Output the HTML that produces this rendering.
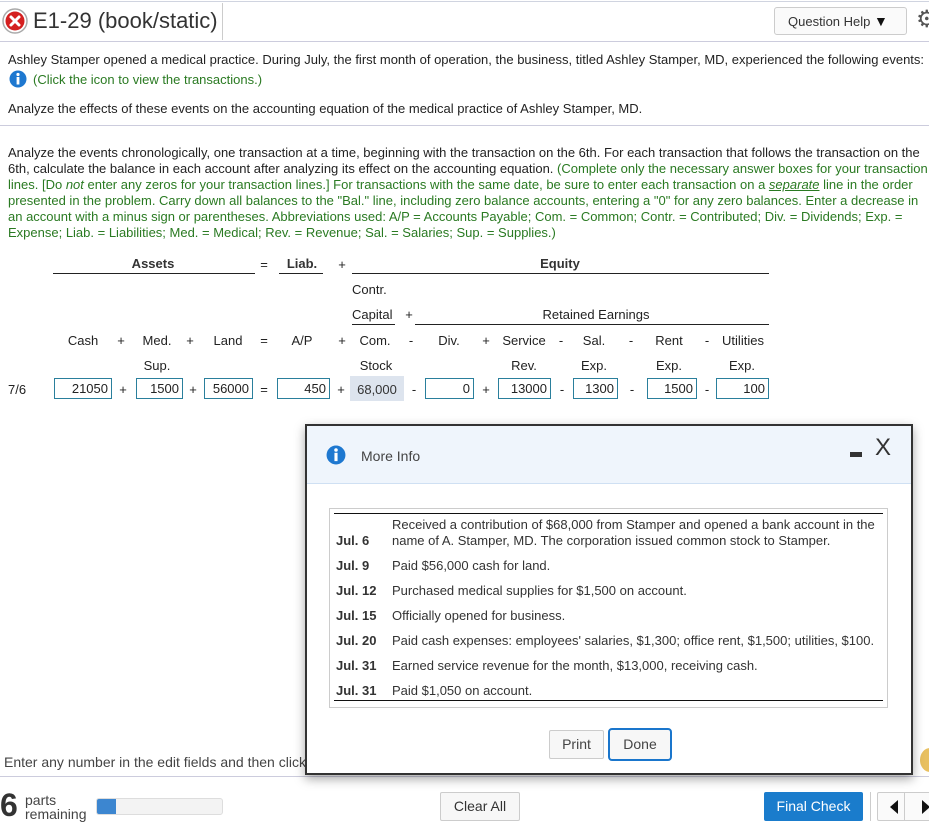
<!DOCTYPE html>
<html><head><meta charset="utf-8"><style>
*{margin:0;padding:0;box-sizing:border-box}
body{width:929px;height:826px;position:relative;overflow:hidden;background:#fff;font-family:"Liberation Sans",Arial,sans-serif;font-size:13px;color:#222}
.a{position:absolute;white-space:nowrap}
.c{position:absolute;white-space:nowrap;transform:translateX(-50%)}
.g{color:#2a7a22}
.hl{position:absolute;height:1px;background:#222}
.box{position:absolute;top:378px;height:21px;border:1px solid #2a7f9c;text-align:right;padding-right:3px;line-height:19px;font-size:13px}
.op{position:absolute;top:382px;transform:translateX(-50%)}
</style></head><body>
<div class="hl" style="left:0;top:1px;width:929px;background:#d0d4e0"></div>
<svg class="a" style="left:2px;top:8px" width="26" height="26" viewBox="0 0 26 26"><circle cx="13" cy="13" r="12" fill="#fff" stroke="#aaa" stroke-width="1.5"/><circle cx="13" cy="13" r="9.5" fill="#d42020"/><path d="M9 9 L17 17 M17 9 L9 17" stroke="#fff" stroke-width="3" stroke-linecap="round"/></svg>
<div class="a" style="left:33px;top:8px;font-size:22px;color:#333">E1-29 (book/static)</div>
<div class="a" style="left:222px;top:3px;width:1px;height:37px;background:#ccc"></div>
<div class="a" style="left:774px;top:7px;width:133px;height:28px;border:1px solid #ccc;border-radius:3px;background:#fafafa;font-size:13px;line-height:26px;padding-left:13px;color:#333">Question Help <span style="font-size:14px;color:#111">▼</span></div>
<div class="a" style="left:916px;top:5px;font-size:24px;color:#555">⚙</div>
<div class="hl" style="left:0;top:41px;width:929px;background:#ccd"></div>

<div class="a" style="left:8px;top:52px">Ashley Stamper opened a medical practice. During July, the first month of operation, the business, titled Ashley Stamper, MD, experienced the following events:</div>
<svg class="a" style="left:9px;top:70px" width="18" height="18" viewBox="0 0 18 18"><circle cx="9" cy="9" r="8.5" fill="#1e78d0"/><rect x="7.6" y="7" width="2.8" height="7.5" fill="#fff"/><circle cx="9" cy="4.5" r="1.6" fill="#fff"/></svg>
<div class="a g" style="left:33px;top:72px">(Click the icon to view the transactions.)</div>
<div class="a" style="left:8px;top:101px">Analyze the effects of these events on the accounting equation of the medical practice of Ashley Stamper, MD.</div>
<div class="hl" style="left:0;top:125px;width:929px;background:#ccd"></div>

<div class="a" style="left:8px;top:145px;line-height:16px">
Analyze the events chronologically, one transaction at a time, beginning with the transaction on the 6th. For each transaction that follows the transaction on the<br>
6th, calculate the balance in each account after analyzing its effect on the accounting equation. <span class="g">(Complete only the necessary answer boxes for your transaction</span><br>
<span class="g">lines. [Do <i>not</i> enter any zeros for your transaction lines.] For transactions with the same date, be sure to enter each transaction on a <i><u>separate</u></i> line in the order</span><br>
<span class="g">presented in the problem. Carry down all balances to the "Bal." line, including zero balance accounts, entering a "0" for any zero balances. Enter a decrease in</span><br>
<span class="g">an account with a minus sign or parentheses. Abbreviations used: A/P = Accounts Payable; Com. = Common; Contr. = Contributed; Div. = Dividends; Exp. =</span><br>
<span class="g">Expense; Liab. = Liabilities; Med. = Medical; Rev. = Revenue; Sal. = Salaries; Sup. = Supplies.)</span>
</div>

<div class="c" style="left:153px;top:256px;font-weight:bold;color:#333">Assets</div>
<div class="hl" style="left:53px;top:273px;width:202px"></div>
<div class="c" style="left:264px;top:257px">=</div>
<div class="c" style="left:302px;top:256px;font-weight:bold;color:#333">Liab.</div>
<div class="hl" style="left:279px;top:273px;width:44px"></div>
<div class="c" style="left:342px;top:257px">+</div>
<div class="c" style="left:560px;top:256px;font-weight:bold;color:#333">Equity</div>
<div class="hl" style="left:352px;top:273px;width:417px"></div>
<div class="a" style="left:352px;top:282px">Contr.</div>
<div class="a" style="left:352px;top:307px">Capital</div>
<div class="hl" style="left:352px;top:324px;width:43px"></div>
<div class="c" style="left:409px;top:307px">+</div>
<div class="c" style="left:596px;top:307px">Retained Earnings</div>
<div class="hl" style="left:415px;top:324px;width:354px"></div>

<div class="c" style="left:83px;top:333px">Cash</div>
<div class="c" style="left:121px;top:333px">+</div>
<div class="c" style="left:157px;top:333px">Med.</div>
<div class="c" style="left:190px;top:333px">+</div>
<div class="c" style="left:228px;top:333px">Land</div>
<div class="c" style="left:264px;top:333px">=</div>
<div class="c" style="left:302px;top:333px">A/P</div>
<div class="c" style="left:342px;top:333px">+</div>
<div class="c" style="left:375px;top:333px">Com.</div>
<div class="c" style="left:411px;top:333px">-</div>
<div class="c" style="left:449px;top:333px">Div.</div>
<div class="c" style="left:486px;top:333px">+</div>
<div class="c" style="left:524px;top:333px">Service</div>
<div class="c" style="left:561px;top:333px">-</div>
<div class="c" style="left:594px;top:333px">Sal.</div>
<div class="c" style="left:631px;top:333px">-</div>
<div class="c" style="left:669px;top:333px">Rent</div>
<div class="c" style="left:707px;top:333px">-</div>
<div class="c" style="left:743px;top:333px">Utilities</div>

<div class="c" style="left:157px;top:358px">Sup.</div>
<div class="c" style="left:376px;top:358px">Stock</div>
<div class="c" style="left:524px;top:358px">Rev.</div>
<div class="c" style="left:594px;top:358px">Exp.</div>
<div class="c" style="left:669px;top:358px">Exp.</div>
<div class="c" style="left:742px;top:358px">Exp.</div>

<div class="a" style="left:8px;top:382px">7/6</div>
<div class="box" style="left:54px;width:58px">21050</div>
<div class="op" style="left:123px">+</div>
<div class="box" style="left:136px;width:47px">1500</div>
<div class="op" style="left:193px">+</div>
<div class="box" style="left:204px;width:49px">56000</div>
<div class="op" style="left:264px">=</div>
<div class="box" style="left:277px;width:53px">450</div>
<div class="op" style="left:341px">+</div>
<div class="a" style="left:350px;top:376px;width:54px;height:25px;background:#dde4ee;text-align:center;line-height:25px;padding-top:1px;color:#333">68,000</div>
<div class="op" style="left:414px">-</div>
<div class="box" style="left:425px;width:49px">0</div>
<div class="op" style="left:486px">+</div>
<div class="box" style="left:498px;width:53px">13000</div>
<div class="op" style="left:562px">-</div>
<div class="box" style="left:573px;width:45px">1300</div>
<div class="op" style="left:632px">-</div>
<div class="box" style="left:647px;width:50px">1500</div>
<div class="op" style="left:707px">-</div>
<div class="box" style="left:716px;width:53px">100</div>

<div class="a" style="left:4px;top:754px;font-size:14px;color:#444">Enter any number in the edit fields and then click</div>
<div class="a" style="left:920px;top:748px;width:20px;height:24px;border-radius:50%;background:#e8c060"></div>
<div class="hl" style="left:0;top:776px;width:929px;background:#ccd"></div>
<div class="a" style="left:0px;top:788px;font-size:32px;font-weight:bold;color:#333;line-height:34px">6</div>
<div class="a" style="left:25px;top:793px;font-size:14px;line-height:14px;color:#444">parts<br>remaining</div>
<div class="a" style="left:96px;top:798px;width:127px;height:17px;border:1px solid #ddd;border-radius:3px;background:#f3f3f3;overflow:hidden"><div style="width:19px;height:100%;background:#3c86d0"></div></div>
<div class="a" style="left:440px;top:792px;width:80px;height:29px;border:1px solid #ccc;border-radius:2px;background:#f7f7f7;text-align:center;line-height:27px;font-size:14px;color:#333">Clear All</div>
<div class="a" style="left:764px;top:792px;width:99px;height:29px;border-radius:2px;background:#1a7ccc;text-align:center;line-height:29px;font-size:14px;color:#fff">Final Check</div>
<div class="a" style="left:870px;top:792px;width:1px;height:29px;background:#ccc"></div>
<div class="a" style="left:877px;top:792px;width:60px;height:29px;border:1px solid #ccc;border-radius:2px;background:#fafafa"></div>
<div class="a" style="left:904px;top:792px;width:1px;height:29px;background:#ccc"></div>
<svg class="a" style="left:885px;top:800px" width="44" height="14"><path d="M13 0 L5 7 L13 14Z" fill="#111"/><path d="M37 0 L45 7 L37 14Z" fill="#111"/></svg>

<div class="a" style="left:305px;top:424px;width:608px;height:351px;border:2px solid #333;background:#fff;box-shadow:0 4px 10px rgba(0,0,0,.35)">
  <div style="position:absolute;left:0;top:0;width:604px;height:58px;background:#eff5fc;border-bottom:1px solid #cfe0f3"></div>
  <svg style="position:absolute;left:19px;top:19px" width="20" height="20" viewBox="0 0 18 18"><circle cx="9" cy="9" r="8.5" fill="#1e78d0"/><rect x="7.6" y="7" width="2.8" height="7.5" fill="#fff"/><circle cx="9" cy="4.5" r="1.6" fill="#fff"/></svg>
  <div style="position:absolute;left:54px;top:22px;font-size:14px;color:#444">More Info</div>
  <div style="position:absolute;left:543px;top:26px;width:12px;height:5px;background:#333"></div>
  <div style="position:absolute;left:568px;top:8px;font-size:24px;color:#333">X</div>
  <div style="position:absolute;left:22px;top:82px;width:559px;height:200px;border:1px solid #ccc"></div>
  <div style="position:absolute;left:27px;top:87px;width:549px;height:1px;background:#111"></div>
  <div style="position:absolute;left:27px;top:274px;width:549px;height:1px;background:#111"></div>
  <div style="position:absolute;left:29px;top:90px;font-size:13px;color:#333;line-height:16px">
    <div style="position:absolute;left:0;top:17px;font-weight:bold">Jul. 6</div>
    <div style="position:absolute;left:56px;top:1px">Received a contribution of $68,000 from Stamper and opened a bank account in the<br>name of A. Stamper, MD. The corporation issued common stock to Stamper.</div>
    <div style="position:absolute;left:0;top:42px;font-weight:bold">Jul. 9</div><div style="position:absolute;left:56px;top:42px">Paid $56,000 cash for land.</div>
    <div style="position:absolute;left:0;top:67px;font-weight:bold">Jul. 12</div><div style="position:absolute;left:56px;top:67px">Purchased medical supplies for $1,500 on account.</div>
    <div style="position:absolute;left:0;top:92px;font-weight:bold">Jul. 15</div><div style="position:absolute;left:56px;top:92px">Officially opened for business.</div>
    <div style="position:absolute;left:0;top:117px;font-weight:bold">Jul. 20</div><div style="position:absolute;left:56px;top:117px">Paid cash expenses: employees' salaries, $1,300; office rent, $1,500; utilities, $100.</div>
    <div style="position:absolute;left:0;top:142px;font-weight:bold">Jul. 31</div><div style="position:absolute;left:56px;top:142px">Earned service revenue for the month, $13,000, receiving cash.</div>
    <div style="position:absolute;left:0;top:167px;font-weight:bold">Jul. 31</div><div style="position:absolute;left:56px;top:167px">Paid $1,050 on account.</div>
  </div>
  <div style="position:absolute;left:242px;top:304px;width:55px;height:29px;border:1px solid #ccc;border-radius:2px;background:#f7f7f7;text-align:center;line-height:27px;font-size:14px;color:#444">Print</div>
  <div style="position:absolute;left:301px;top:302px;width:64px;height:33px;border:2px solid #1a76cc;border-radius:4px;background:#f7f7f7;text-align:center;line-height:29px;font-size:14px;color:#444">Done</div>
</div>
</body></html>
